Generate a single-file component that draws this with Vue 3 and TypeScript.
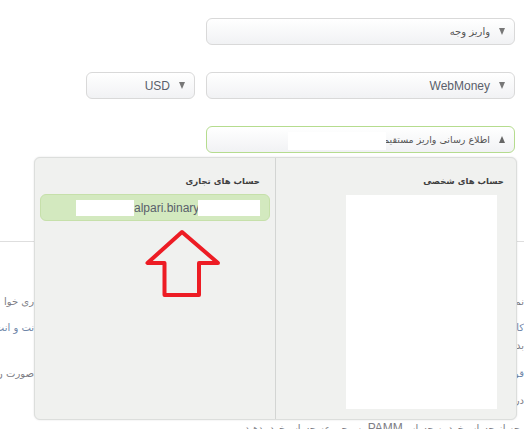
<script setup lang="ts">
interface Note { left: string; right: string; cls: string }
const notes: Note[] = [
  { left: 'ری خوا', right: 'نم', cls: 'n1' },
  { left: 'نت و انت', right: 'کا', cls: 'n2 link' },
  { left: '', right: 'بد', cls: 'n3' },
  { left: 'صورت ن', right: 'قو', cls: 'n4 link' },
  { left: '', right: 'در', cls: 'n5' },
]
</script>

<template>
  <div class="page">
    <div class="form">
      <div class="row first">
        <button class="select wide" type="button">
          <span class="caret down"></span>
          <span class="label fa">واریز وجه</span>
        </button>
      </div>
      <div class="row second">
        <button class="select wide" type="button">
          <span class="caret down"></span>
          <span class="label">WebMoney</span>
        </button>
        <button class="select narrow" type="button">
          <span class="caret down"></span>
          <span class="label">USD</span>
        </button>
      </div>
      <div class="row third">
        <button class="select wide open" type="button">
          <span class="caret up"></span>
          <span class="label fa title">اطلاع رسانی واریز مستقیم</span>
          <span class="mask-title"></span>
        </button>
      </div>
    </div>

    <div class="content">
      <hr class="rule" />
      <div v-for="n in notes" :key="n.cls" class="note" :class="n.cls">
        <span class="frag-left" dir="rtl">{{ n.left }}</span>
        <span class="frag-right" dir="rtl">{{ n.right }}</span>
      </div>
      <p class="last" dir="rtl">تا وجه از حساب خود به حساب <span class="latin">PAMM</span> به مجموعه حساب خود بدهید</p>
    </div>

    <div class="panel">
      <section class="col personal">
        <h3 class="heading">حساب های شخصی</h3>
        <div class="blank-list"></div>
      </section>
      <section class="col trading">
        <h3 class="heading">حساب های تجاری</h3>
        <div class="account">
          <span class="blank left"></span>
          <span class="acc-name">alpari.binary</span>
          <span class="blank right"></span>
        </div>
      </section>
      <svg class="arrow" width="80" height="72" viewBox="0 0 80 72" aria-hidden="true">
        <path d="M38 3 L3.5 34 H20.5 V66 H55 V34 H74 Z" fill="none" stroke="#ed1c24" stroke-width="4" stroke-linejoin="round" />
      </svg>
    </div>
  </div>
</template>

<style scoped>
.page {
  position: relative;
  width: 524px;
  height: 429px;
  overflow: hidden;
  background: #fff;
  font-family: "Liberation Sans", "DejaVu Sans", sans-serif;
  color: #555;
}
.form {
  display: flex;
  flex-direction: column;
  padding: 18px 9px 0 0;
}
.row {
  display: flex;
  flex-direction: row-reverse;
  gap: 11px;
  height: 27px;
}
.second,
.third {
  margin-top: 27px;
}
.select {
  position: relative;
  display: flex;
  flex-direction: row-reverse;
  align-items: center;
  box-sizing: border-box;
  height: 27px;
  padding: 0 9px 0 0;
  border: 1px solid #d9d9d9;
  border-radius: 6px;
  background: linear-gradient(#fff, #f1f2f4);
  font: inherit;
  color: inherit;
}
.wide { width: 309px; }
.narrow { width: 109px; }
.open { border-color: #b5dc8e; }
.caret {
  width: 0;
  height: 0;
  margin-left: 9px;
  border-left: 3.5px solid transparent;
  border-right: 3.5px solid transparent;
}
.down { border-top: 7px solid #777; }
.up { border-bottom: 7px solid #666; }
.label {
  font-size: 12px;
  color: #5a5f6b;
}
.fa {
  font-family: "DejaVu Sans", sans-serif;
  font-size: 10px;
  color: #555;
}
.title {
  font-size: 9.5px;
}
.mask-title {
  position: absolute;
  left: 81px;
  top: 5px;
  width: 98px;
  height: 18px;
  background: #fff;
}
.content {
  margin-top: 88px;
}
.rule {
  margin: 0 0 53px;
  border: 0;
  border-top: 1px solid #dedede;
}
.note {
  display: flex;
  justify-content: space-between;
  height: 14px;
  font-family: "DejaVu Sans", sans-serif;
  font-size: 10px;
  line-height: 14px;
  color: #7d7d85;
}
.link .frag-right,
.n2 .frag-left {
  color: #6f86a8;
}
.frag-left {
  width: 34px;
  white-space: nowrap;
}
.frag-right {
  width: 7px;
  overflow: hidden;
  white-space: nowrap;
}
.n2 { margin-top: 12px; }
.n3 { margin-top: 4px; }
.n4 { margin-top: 14px; }
.n5 { margin-top: 13px; }
.last {
  margin: 13px -10px 0 0;
  font-family: "DejaVu Sans", sans-serif;
  font-size: 10px;
  line-height: 14px;
  color: #7d7d85;
  white-space: nowrap;
}
.latin {
  font-family: "Liberation Sans", sans-serif;
  font-size: 12px;
}
.panel {
  position: absolute;
  left: 34px;
  top: 157px;
  box-sizing: border-box;
  width: 483px;
  height: 263px;
  display: flex;
  flex-direction: row-reverse;
  border: 1px solid #dcdedc;
  border-radius: 6px;
  background: #f0f1ef;
  box-shadow: 0 0 2px rgba(0, 0, 0, 0.12);
}
.col {
  box-sizing: border-box;
  display: flex;
  flex-direction: column;
}
.personal {
  width: 241px;
  padding: 0 19px 10px 17px;
}
.trading {
  flex: 1;
  padding: 0 5px;
  border-right: 1px solid #d3d5d3;
}
.heading {
  margin: 0;
  height: 36px;
  line-height: 46px;
  font-family: "DejaVu Sans", sans-serif;
  font-size: 8.5px;
  font-weight: 700;
  color: #3f3f3f;
  text-align: right;
  direction: rtl;
  padding-right: 10px;
}
.personal .heading {
  padding-right: 0;
  margin-right: -7px;
  height: 37px;
}
.blank-list {
  width: 151px;
  flex: 1;
  align-self: flex-end;
  background: #fff;
}
.account {
  box-sizing: border-box;
  display: flex;
  align-items: center;
  justify-content: flex-end;
  padding-right: 9px;
  width: 230px;
  height: 27px;
  border: 1px solid #c6e0aa;
  border-radius: 6px;
  background: #d3e9bf;
}
.blank {
  height: 16px;
  background: #fff;
}
.left { width: 58px; }
.right { width: 62px; }
.acc-name {
  width: 64px;
  text-align: center;
  font-size: 12px;
  color: #5a5f6b;
  white-space: nowrap;
}
.arrow {
  position: absolute;
  left: 109px;
  top: 71px;
}
</style>

<style>
html, body { margin: 0; background: #fff; overflow: hidden; }
</style>
